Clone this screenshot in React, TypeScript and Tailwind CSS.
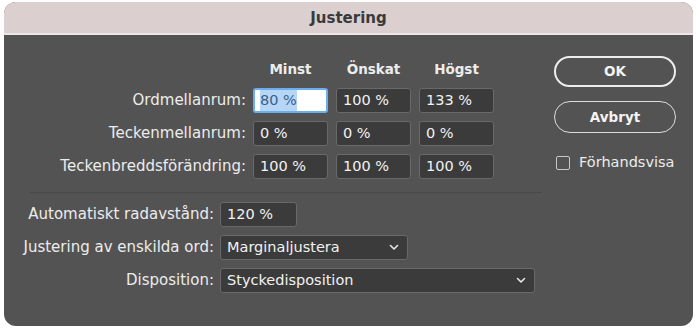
import type { ReactNode } from "react";

const font = { fontFamily: '"DejaVu Sans", "Liberation Sans", sans-serif' };

function Field({ children, wide }: { children: ReactNode; wide?: boolean }) {
  return (
    <div
      className={`flex h-[25px] items-center rounded-[3px] border border-[#696969] bg-[#3b3b3b] pl-[6px] text-[14.5px] text-[#f2f2f2] ${
        wide ? "w-[77px]" : "w-[75px]"
      }`}
    >
      {children}
    </div>
  );
}

function Select({ value, width }: { value: string; width: string }) {
  return (
    <div
      className={`flex h-[25px] items-center justify-between rounded-[3px] border border-[#696969] bg-[#3b3b3b] pl-[6px] pr-[8px] text-[14.5px] text-[#f2f2f2] ${width}`}
    >
      <span className="whitespace-nowrap">{value}</span>
      <svg width="10" height="7" viewBox="0 0 10 7" className="text-[#e6e6e6]">
        <polyline
          points="1.5,1.5 5,5 8.5,1.5"
          fill="none"
          stroke="currentColor"
          strokeWidth="1.6"
          strokeLinecap="round"
          strokeLinejoin="round"
        />
      </svg>
    </div>
  );
}

const rows = [
  { label: "Ordmellanrum:", values: ["80 %", "100 %", "133 %"] },
  { label: "Teckenmellanrum:", values: ["0 %", "0 %", "0 %"] },
  { label: "Teckenbreddsförändring:", values: ["100 %", "100 %", "100 %"] },
];

const label = "whitespace-nowrap text-right text-[15px] text-[#ececec]";

export default function App() {
  return (
    <div className="h-[331px] w-[700px] bg-white pl-[4px] pt-[2px]" style={font}>
      <div className="flex h-[324px] w-[689px] flex-col overflow-hidden rounded-[12px] bg-[#535353]">
        <div className="flex h-[33px] items-center justify-center border-b-2 border-[#ece8e8] bg-[#dccfd0] pt-[1px] text-[15px] font-bold text-[#3a3a3a]">
          Justering
        </div>

        <div className="flex flex-1 pt-[25px]">
          <div className="flex w-[546px] flex-col">
            <div className="flex h-[18px] items-center gap-[8px] pl-[249px] text-[13.5px] font-bold text-[#ececec]">
              <span className="w-[75px] text-center">Minst</span>
              <span className="w-[75px] text-center">Önskat</span>
              <span className="w-[75px] text-center">Högst</span>
            </div>

            <div className="mt-[10px] flex flex-col gap-[8px]">
              {rows.map((row, r) => (
                <div key={row.label} className="flex items-center">
                  <span className={`w-[243px] pr-[1px] ${label}`}>{row.label}</span>
                  <div className="ml-[6px] flex gap-[8px]">
                    {row.values.map((v, i) =>
                      r === 0 && i === 0 ? (
                        <div
                          key={i}
                          className="flex h-[25px] w-[75px] items-center rounded-[3px] border-2 border-[#6aaef0] bg-white pl-[5px] text-[14.5px] text-[#3d5f8a]"
                        >
                          <span className="bg-[#b6d6f8]">{v}</span>
                        </div>
                      ) : (
                        <Field key={i}>{v}</Field>
                      ),
                    )}
                  </div>
                </div>
              ))}
            </div>

            <div className="ml-[26px] mt-[13px] h-px w-[512px] bg-[#494949]" />

            <div className="mt-[9px] flex flex-col gap-[8px]">
              <div className="flex items-center">
                <span className={`w-[210px] ${label}`}>Automatiskt radavstånd:</span>
                <div className="ml-[6px]">
                  <Field wide>120 %</Field>
                </div>
              </div>
              <div className="flex items-center">
                <span className={`w-[210px] ${label}`}>Justering av enskilda ord:</span>
                <div className="ml-[6px]">
                  <Select value="Marginaljustera" width="w-[188px]" />
                </div>
              </div>
              <div className="flex items-center">
                <span className={`w-[210px] ${label}`}>Disposition:</span>
                <div className="ml-[6px]">
                  <Select value="Styckedisposition" width="w-[315px]" />
                </div>
              </div>
            </div>
          </div>

          <div className="flex flex-col pl-[4px]">
            <button className="-mt-[4px] flex h-[31px] w-[122px] items-center justify-center rounded-full border-2 border-[#ededed] text-[13.5px] font-bold text-[#f4f4f4]">
              OK
            </button>
            <button className="mt-[14px] flex h-[32px] w-[122px] items-center justify-center rounded-full border-[1.5px] border-[#dcdcdc] text-[13.5px] font-bold text-[#f4f4f4]">
              Avbryt
            </button>
            <label className="ml-[2px] mt-[19px] flex items-center gap-[9px] whitespace-nowrap text-[14.5px] text-[#ececec]">
              <span className="h-[14px] w-[14px] shrink-0 rounded-[2px] border border-[#c8c8c8]" />
              Förhandsvisa
            </label>
          </div>
        </div>
      </div>
    </div>
  );
}
